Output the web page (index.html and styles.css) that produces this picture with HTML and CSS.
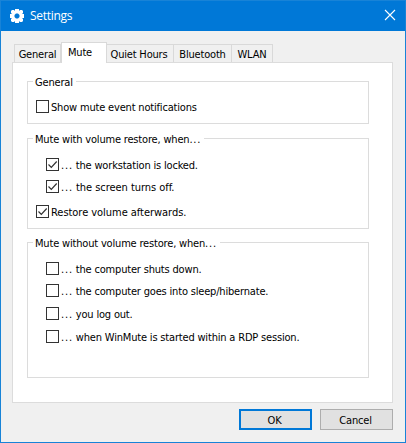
FILE: index.html
```html
<!DOCTYPE html>
<html lang="en">
<head>
<meta charset="utf-8">
<title>Settings</title>
<link rel="stylesheet" href="styles.css">
</head>
<body>
<div class="window">
  <header class="titlebar">
    <svg class="gear" width="14" height="14" viewBox="0 0 14 14"><path fill="#fff" fill-rule="evenodd" d="M5 0h4v2l1-1h2l1 1v2l-1 1h2v4h-2l1 1v2l-1 1h-2L9 12v2H5v-2l-1 1H2l-1-1v-2l1-1H0V5h2L1 4V2l1-1h2l1 1zM6 4.500L4.500 6v2L6 9.500h2L9.500 8V6L8 4.500z"/></svg>
    <h1 class="title">Settings</h1>
    <svg class="close" width="10" height="10" viewBox="0 0 10 10"><path d="M0 0l10 10M10 0L0 10" stroke="#fff" stroke-width="1.1"/></svg>
  </header>
  <main class="content">
    <nav class="tabs">
      <div class="tab tab-general">General</div>
      <div class="tab tab-mute active">Mute</div>
      <div class="tab tab-quiet">Quiet Hours</div>
      <div class="tab tab-bluetooth">Bluetooth</div>
      <div class="tab tab-wlan">WLAN</div>
    </nav>
    <section class="panel">
      <div class="group group-general">
        <h2 class="legend"><span>General</span></h2>
        <div class="option"><i class="box"></i><span>Show mute event notifications</span></div>
      </div>
      <div class="group group-restore">
        <h2 class="legend"><span>Mute with volume restore, when<b>...</b></span></h2>
        <div class="option indent"><i class="box"><svg width="11" height="11" viewBox="0 0 11 11"><path d="M1.500 5.500L4.300 8.300 9.700 2.500"/></svg></i><span><b>...</b> the workstation is locked.</span></div>
        <div class="option indent loose"><i class="box"><svg width="11" height="11" viewBox="0 0 11 11"><path d="M1.500 5.500L4.300 8.300 9.700 2.500"/></svg></i><span><b>...</b> the screen turns off.</span></div>
        <div class="option after loose"><i class="box"><svg width="11" height="11" viewBox="0 0 11 11"><path d="M1.500 5.500L4.300 8.300 9.700 2.500"/></svg></i><span>Restore volume afterwards.</span></div>
      </div>
      <div class="group group-plain">
        <h2 class="legend"><span>Mute without volume restore, when<b>...</b></span></h2>
        <div class="option indent"><i class="box"></i><span><b>...</b> the computer shuts down.</span></div>
        <div class="option indent"><i class="box"></i><span><b>...</b> the computer goes into sleep/hibernate.</span></div>
        <div class="option indent logout"><i class="box"></i><span><b>...</b> you log out.</span></div>
        <div class="option indent logout"><i class="box"></i><span><b>...</b> when WinMute is started within a RDP session.</span></div>
      </div>
    </section>
    <footer class="actions">
      <button class="ok">OK</button>
      <button class="cancel">Cancel</button>
    </footer>
  </main>
</div>
</body>
</html>
```
FILE: styles.css
```css
* { box-sizing: border-box; }
body { margin: 0; font: 11px/14px "DejaVu Sans Condensed", "DejaVu Sans", sans-serif; font-stretch: condensed; letter-spacing: -0.18px; color: #000; }
h1, h2 { margin: 0; font: inherit; }
.window { width: 406px; height: 443px; border: 1px solid #1883d7; background: #f0f0f0; }
.titlebar { display: flex; align-items: center; height: 30px; padding: 0 9px; background: #0078d7; color: #fff; }
.title { margin-left: 6px; font: 12px/14px "Open Sans", sans-serif; letter-spacing: -0.3px; flex: 1; }
.close { overflow: visible; margin: -2px 1px 0 0; }
.content { padding: 11px 12px 0 11px; }
.tabs { display: flex; align-items: flex-end; height: 20px; padding-left: 2px; }
.tab { height: 18px; padding-top: 3px; border: 1px solid #d9d9d9; border-bottom: 0; text-align: center; white-space: nowrap; }
.tab + .tab { border-left: 0; }
.tab-general { width: 47px; }
.tab-mute { width: 46px; }
.tab-quiet { width: 67px; padding-right: 2px; }
.tab-bluetooth { width: 58px; }
.tab-wlan { width: 41px; }
.tab.active { position: relative; height: 21px; margin-bottom: -1px; padding: 3px 8px 0 0; border-left: 1px solid #d9d9d9; background: #fff; }
.panel { height: 341px; padding: 18px 23px 0 14px; border: 1px solid #dcdcdc; background: #fff; }
.group { border: 1px solid #dcdcdc; }
.group-general { height: 43px; }
.group-restore { height: 91px; margin-top: 14px; }
.group-plain { height: 136px; margin-top: 13px; }
.legend { height: 14px; margin: -7px 0 0 5px; }
.legend span { display: inline-block; padding: 1px 3px 0 2px; background: #fff; }
.option { display: flex; align-items: flex-start; height: 13px; margin: 11px 0 0 8px; white-space: nowrap; }
.option span { padding-top: 1px; }
.option.loose { letter-spacing: -0.04px; }
.option.indent { margin-left: 18px; margin-top: 12px; }
.option.indent + .option.indent { margin-top: 9px; }
.option.indent + .option.logout { margin-top: 10px; }
.option.after { margin-top: 12px; }
.box { width: 13px; height: 13px; margin-right: 2px; border: 1px solid #333; background: #fff; }
.box svg { display: block; fill: none; stroke: #333; stroke-width: 1.2; }
b { font-weight: 400; letter-spacing: 0.8px; }
.actions { display: flex; justify-content: flex-end; gap: 8px; margin-top: 6px; }
button { width: 73px; height: 21px; padding: 2px 2px 0 0; border: 1px solid #adadad; background: #e1e1e1; color: #000; font: inherit; letter-spacing: inherit; }
button.ok { border: 2px solid #0078d7; }
```
